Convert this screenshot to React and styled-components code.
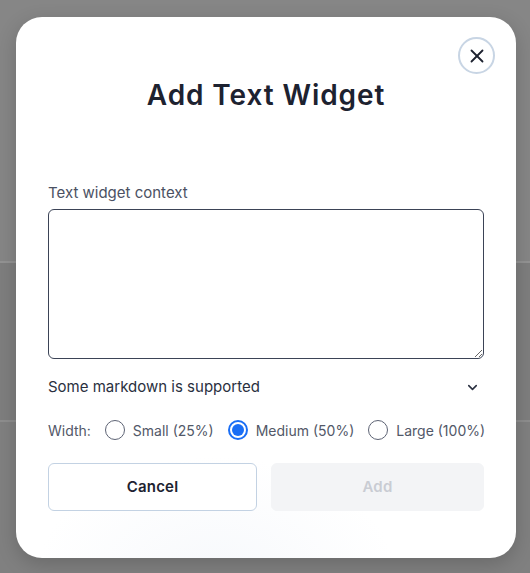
import React, { useState } from 'react';
import styled, { createGlobalStyle } from 'styled-components';
import { X, ChevronDown } from 'lucide-react';

const GlobalStyle = createGlobalStyle`
  html, body {
    margin: 0;
    padding: 0;
  }
  body {
    min-height: 100vh;
    font-family: "Inter", "Noto Sans", sans-serif;
    background: linear-gradient(
      180deg,
      #868686 0px,
      #868686 261px,
      #939393 261px,
      #939393 263px,
      #7e7e7e 263px,
      #7e7e7e 420px,
      #8e8e8e 420px,
      #8e8e8e 422px,
      #808080 422px
    );
  }
`;

// backdrop holding the dialog
const Overlay = styled.div`
  display: flex;
  justify-content: center;
  padding: 17px 14px 15px 16px;
`;

const Modal = styled.div`
  width: 500px;
  box-sizing: border-box;
  background:
    radial-gradient(ellipse 180px 120px at 200px 560px, #f7f9fc 0%, rgba(255,255,255,0) 100%),
    #ffffff;
  border-radius: 26px;
  box-shadow: 0 6px 20px rgba(0, 0, 0, 0.18);
  padding: 20px 21px 47px 32px;
  display: flex;
  flex-direction: column;
`;

const CloseRow = styled.div`
  display: flex;
  justify-content: flex-end;
`;

const CloseButton = styled.button`
  width: 37px;
  height: 37px;
  border-radius: 50%;
  border: 2px solid #c8d5e4;
  background: #fff;
  display: flex;
  align-items: center;
  justify-content: center;
  padding: 0;
  color: #1d2230;
  cursor: pointer;
`;

const Title = styled.h2`
  margin: 4px 11px 0 0;
  text-align: center;
  font-size: 28px;
  line-height: 34px;
  font-weight: 600;
  color: #1d2230;
  letter-spacing: 0.9px;
`;

const Body = styled.div`
  display: flex;
  flex-direction: column;
  margin: 71px 11px 0 0;
`;

const Label = styled.label`
  font-size: 15px;
  line-height: 20px;
  color: #4b5163;
  margin-bottom: 6px;
`;

const TextArea = styled.textarea`
  height: 150px;
  box-sizing: border-box;
  border: 1px solid #3b4356;
  border-radius: 6px;
  font: inherit;
  padding: 8px 10px;
  resize: vertical;
  outline: none;
`;

const HintRow = styled.div`
  display: flex;
  align-items: center;
  justify-content: space-between;
  margin-top: 18px;
  padding-right: 4px;
  font-size: 15px;
  line-height: 20px;
  color: #2a3040;
`;

const WidthRow = styled.div`
  display: flex;
  align-items: center;
  margin-top: 21px;
  height: 24px;
  font-size: 14px;
  color: #525868;
  white-space: nowrap;
`;

const WidthLabel = styled.span`
  margin-right: 14px;
`;

const Option = styled.label`
  display: flex;
  align-items: center;
  gap: 8px;
  margin-right: ${p => (p.last ? 0 : 14)}px;
  cursor: pointer;
`;

const RadioCircle = styled.span`
  width: 20px;
  height: 20px;
  box-sizing: border-box;
  border-radius: 50%;
  border: ${p => (p.checked ? '2px solid #1a6ef5' : '1.5px solid #5d6374')};
  display: flex;
  align-items: center;
  justify-content: center;

  &::after {
    content: '';
    width: 12px;
    height: 12px;
    border-radius: 50%;
    background: ${p => (p.checked ? '#1a6ef5' : 'transparent')};
  }
`;

const Buttons = styled.div`
  display: grid;
  grid-template-columns: 209px 1fr;
  gap: 14px;
  margin-top: 21px;
`;

const Button = styled.button`
  height: 48px;
  border-radius: 6px;
  font-family: inherit;
  font-size: 15px;
  font-weight: 600;
  letter-spacing: 0.2px;
  padding-bottom: 2px;
  border: ${p => (p.primary ? '1px solid #f3f4f6' : '1px solid #c3d2e3')};
  background: ${p => (p.primary ? '#f3f4f6' : '#ffffff')};
  color: ${p => (p.primary ? '#c9ccd3' : '#1d2230')};
  cursor: ${p => (p.primary ? 'not-allowed' : 'pointer')};
`;

const sizes = [
  { id: 'small', label: 'Small (25%)' },
  { id: 'medium', label: 'Medium (50%)' },
  { id: 'large', label: 'Large (100%)' },
];

export default function App() {
  const [size, setSize] = useState('medium');

  return (
    <>
      <GlobalStyle />
      <Overlay>
        <Modal>
          <CloseRow>
            <CloseButton aria-label="Close">
              <X size={22} strokeWidth={2} />
            </CloseButton>
          </CloseRow>
          <Title>Add Text Widget</Title>

          <Body>
            <Label>Text widget context</Label>
            <TextArea />

            <HintRow>
              <span>Some markdown is supported</span>
              <ChevronDown size={15} strokeWidth={2.5} />
            </HintRow>

            <WidthRow>
              <WidthLabel>Width:</WidthLabel>
              {sizes.map((s, i) => (
                <Option key={s.id} last={i === sizes.length - 1} onClick={() => setSize(s.id)}>
                  <RadioCircle checked={size === s.id} />
                  {s.label}
                </Option>
              ))}
            </WidthRow>

            <Buttons>
              <Button>Cancel</Button>
              <Button primary disabled>Add</Button>
            </Buttons>
          </Body>
        </Modal>
      </Overlay>
    </>
  );
}
